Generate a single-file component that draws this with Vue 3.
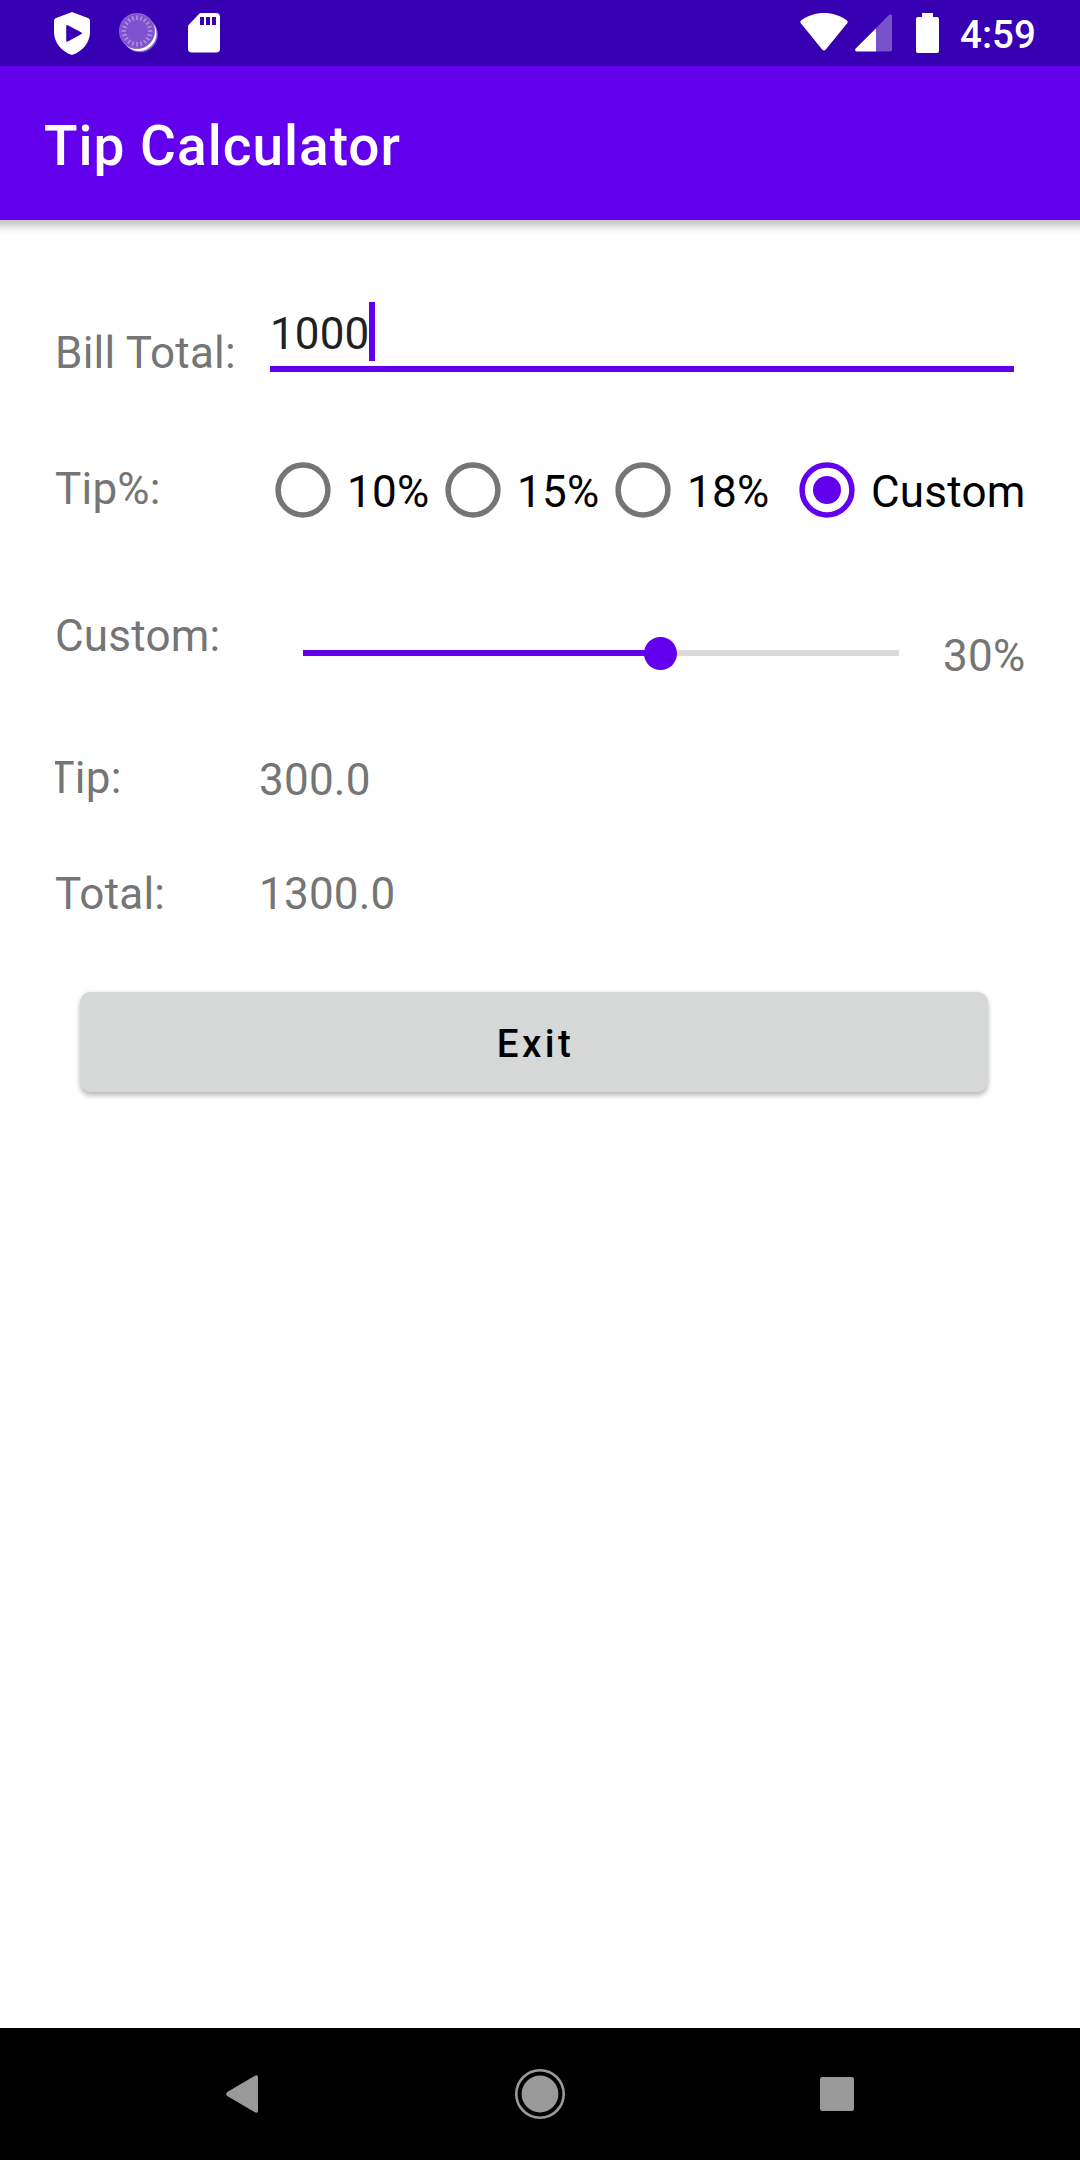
<script setup>
import { ref, computed } from 'vue'

const bill = ref(1000)
const percent = ref(30)
const selected = ref('Custom')
const options = ['10%', '15%', '18%', 'Custom']
const sliderMax = 50

const fill = computed(() => (percent.value / sliderMax) * 100 + '%')
const tip = computed(() => ((bill.value * percent.value) / 100).toFixed(1))
const total = computed(() => (bill.value * (1 + percent.value / 100)).toFixed(1))

const ticks = Array.from({ length: 20 }, (_, i) => i * 18)
</script>

<template>
  <div class="screen">
    <header class="status">
      <div class="status-left">
        <svg class="shield" width="36" height="43" viewBox="0 0 36 43">
          <path fill="#fff" fill-rule="evenodd" d="M18 0 L34.5 6.3 Q36 7 36 8.5 V20 C36 30 29 39.500 18 43 C7 39.500 0 30 0 20 V8.500 Q0 7 1.500 6.300 Z M12.200 14.300 V28.500 Q12.200 30.300 13.800 29.400 L27.500 22 Q28.600 21.300 27.500 20.600 L13.800 13.300 Q12.200 12.500 12.200 14.300 Z" />
        </svg>
        <svg class="spinner" width="40" height="40" viewBox="0 0 40 40">
          <circle cx="21" cy="21.500" r="17.800" fill="#fff" opacity=".4" />
          <circle cx="20" cy="20.500" r="17.500" fill="#fff" />
          <circle cx="18" cy="18" r="18" fill="#8c62d3" />
          <circle cx="18" cy="18" r="17" fill="#8052cf" />
          <g stroke="#aa8fde" stroke-width="1.700">
            <line v-for="a in ticks" :key="a" x1="18" y1="2.500" x2="18" y2="7" :transform="`rotate(${a} 18 18)`" />
          </g>
        </svg>
        <svg class="sd" width="32" height="40" viewBox="0 0 32 40">
          <path fill="#fff" fill-rule="evenodd" d="M12.500 0 H28 Q32 0 32 4 V36 Q32 39.500 28 39.500 H4 Q0 39.500 0 36 V13.500 Q0 12.500 1 11.500 L11 1 Q12 0 12.500 0 Z M12 4 V12 H16 V4 Z M18 4 V12 H22 V4 Z M24 4 V12 H28 V4 Z" />
        </svg>
      </div>
      <div class="status-right">
        <svg class="wifi" width="48" height="38" viewBox="0 0 48 38">
          <path fill="#fff" d="M1 7.500 C14 -2.500 34 -2.500 47 7.500 Q48.200 8.700 47.200 10.200 L25.800 36.500 Q24 38.500 22.200 36.500 L.8 10.200 Q-.2 8.700 1 7.500 Z" />
        </svg>
        <svg class="signal" width="37" height="38" viewBox="0 0 37 38">
          <path fill="#fff" opacity=".32" d="M21 14.200 L33.800 1 Q37 -.8 37 2 V35.500 Q37 37.500 35 37.500 H21 Z" />
          <path fill="#fff" d="M21 14.200 V37.500 H1.500 Q-.8 37 .7 34.500 Z" />
        </svg>
        <svg class="battery" width="23" height="40" viewBox="0 0 23 40">
          <path fill="#fff" d="M6 0 H17 V4 H21 Q23 4 23 6 V38 Q23 40 21 40 H2 Q0 40 0 38 V6 Q0 4 2 4 H6 Z" />
        </svg>
        <span class="clock">4:59</span>
      </div>
    </header>

    <div class="appbar"><h1>Tip Calculator</h1></div>
    <div class="bar-shadow"></div>

    <main>
      <div class="row bill">
        <span class="label">Bill Total:</span>
        <div class="field"><span>{{ bill }}</span><i class="caret"></i></div>
      </div>

      <div class="row tips">
        <span class="label">Tip%:</span>
        <div class="radios">
          <div v-for="o in options" :key="o" class="radio" :class="{ on: o === selected }">
            <svg width="88" height="58" viewBox="0 0 88 58">
              <circle class="ring" cx="44" cy="29" r="24.900" />
              <circle v-if="o === selected" class="dot" cx="44" cy="29" r="14" />
            </svg>
            <span>{{ o }}</span>
          </div>
        </div>
      </div>

      <div class="row custom">
        <span class="label">Custom:</span>
        <div class="slider">
          <div class="fill" :style="{ width: fill }"><i class="thumb"></i></div>
        </div>
        <span class="pct">{{ percent }}%</span>
      </div>

      <div class="row tip">
        <span class="label clipped">Tip:</span>
        <span class="value">{{ tip }}</span>
      </div>

      <div class="row total">
        <span class="label">Total:</span>
        <span class="value">{{ total }}</span>
      </div>

      <button class="exit">Exit</button>
    </main>

    <nav>
      <svg width="32" height="38" viewBox="0 0 32 38">
        <path fill="#999" d="M28.500 1 Q32 -1 32 2.500 V35.500 Q32 39 28.500 37 L1.200 21 Q-.8 19 1.200 17 Z" />
      </svg>
      <svg class="home" width="50" height="50" viewBox="0 0 50 50">
        <circle cx="25" cy="25" r="23.700" fill="none" stroke="#999" stroke-width="2.600" />
        <circle cx="25" cy="25" r="18.400" fill="#999" />
      </svg>
      <svg width="34" height="34" viewBox="0 0 34 34">
        <rect width="34" height="34" rx="2.500" fill="#999" />
      </svg>
    </nav>
  </div>
</template>

<style>
body { margin: 0; background: #fff; }
</style>

<style scoped>
.screen {
  width: 1080px;
  height: 2160px;
  display: flex;
  flex-direction: column;
  background: #fff;
  overflow: hidden;
  font-family: Roboto, sans-serif;
  font-size: 44px;
  line-height: 52px;
  letter-spacing: .22px;
  color: #757575;
}
svg { display: block; flex: none; }

.status {
  height: 66px;
  display: flex;
  justify-content: space-between;
  background: #3700b3;
  color: #fff;
}
.status-left, .status-right { display: flex; align-items: flex-start; }
.status-left { padding-left: 54px; }
.shield { margin-top: 12px; }
.spinner { margin: 13px 0 0 28.500px; }
.sd { margin: 13px 0 0 29.500px; }
.status-right { width: 280px; }
.wifi { margin-top: 13px; }
.signal { margin: 14px 0 0 7px; }
.battery { margin: 13px 0 0 24px; }
.clock {
  margin: 12px 0 0 21px;
  font-size: 38.500px;
  line-height: 45px;
  font-weight: 500;
  letter-spacing: 0;
}

.appbar {
  height: 154px;
  box-sizing: border-box;
  padding: 48px 44px 0;
  background: #6200ee;
  color: #fff;
}
h1 {
  margin: 0;
  font-size: 55px;
  line-height: 64px;
  font-weight: 500;
  letter-spacing: 1px;
}
.bar-shadow {
  height: 16px;
  background: linear-gradient(#c6c6c6, #d0d0d0 22%, #ececec 50%, #fafafa 75%, #fff);
}

main { flex: 1; display: flex; flex-direction: column; padding-left: 55px; }
.row { display: flex; align-items: flex-start; flex: none; }
.label { flex: none; white-space: nowrap; }

.bill { height: 204px; }
.bill .label { width: 215px; margin-top: 91px; }
.field {
  box-sizing: border-box;
  width: 744px;
  height: 70px;
  margin-top: 66px;
  display: flex;
  border-bottom: 6px solid #6200ee;
  color: #212121;
}
.field span { margin-top: 6px; letter-spacing: .1px; }
.caret { width: 6px; height: 59px; background: #6200ee; }

.tips { height: 144px; }
.tips .label { width: 204px; margin-top: 23px; }
.radios { display: flex; margin-top: 21px; }
.radio { display: flex; color: #000; }
.radio span { width: 82px; margin-top: 5px; }
.radio:last-child { margin-left: 14px; }
.ring { fill: none; stroke: #757575; stroke-width: 5.500px; }
.on .ring { stroke: #6200ee; }
.dot { fill: #6200ee; }

.custom { height: 158px; }
.custom .label { width: 248px; margin-top: 26px; }
.slider { width: 596px; height: 6px; margin-top: 66px; background: #dadada; }
.fill { position: relative; height: 6px; background: #6200ee; }
.thumb {
  position: absolute;
  right: -16.500px;
  top: -13.500px;
  width: 33px;
  height: 33px;
  border-radius: 50%;
  background: #6200ee;
}
.pct { margin: 46px 0 0 44px; }

.tip { height: 106px; }
.tip .label, .total .label { width: 204px; }
.tip .label { margin-top: 10px; }
.tip .value { margin-top: 12px; }
.clipped { overflow: hidden; text-indent: -6.700px; }
.total { height: 144px; }
.total .label, .total .value { margin-top: 20px; }

.exit {
  flex: none;
  width: 908px;
  height: 100px;
  margin-left: 25px;
  padding: 2px 0 0 3px;
  border: 0;
  border-radius: 11px;
  background: #d6d8d7;
  box-shadow: 0 4px 5px rgba(0, 0, 0, .23), 0 0 4px rgba(0, 0, 0, .1);
  color: #000;
  font: 500 38.500px/45px Roboto, sans-serif;
  letter-spacing: 3.430px;
}

nav {
  height: 132px;
  flex: none;
  box-sizing: border-box;
  display: flex;
  align-items: center;
  justify-content: space-between;
  padding: 0 226px;
  background: #000;
}
.home { margin-left: 2px; }
</style>
